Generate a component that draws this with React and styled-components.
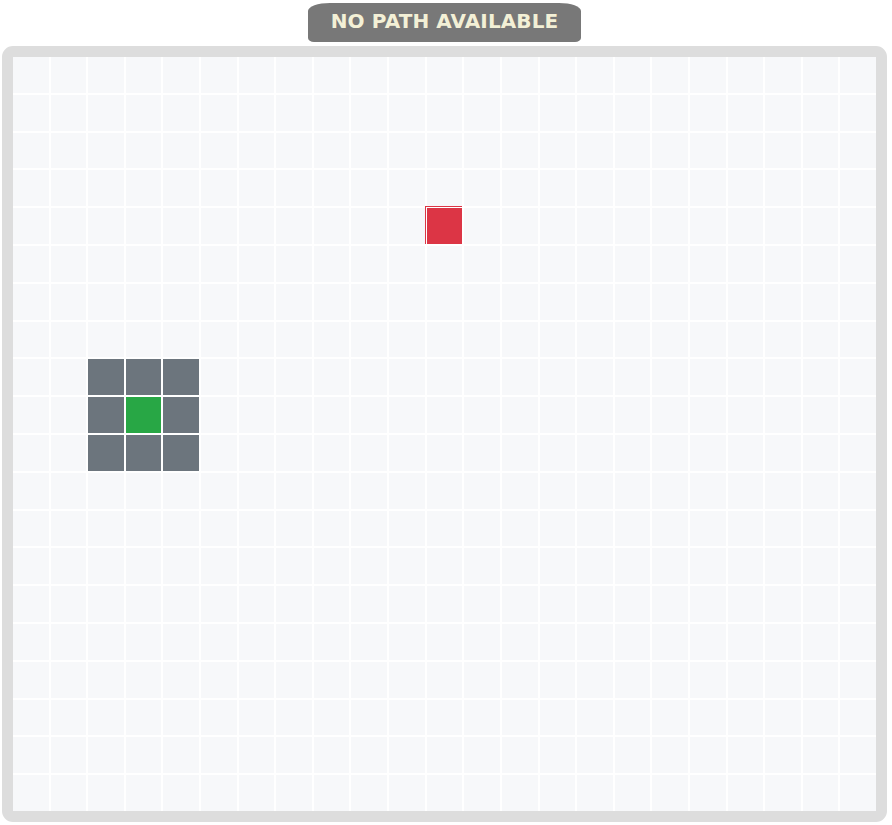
import React from "react";
import styled, { createGlobalStyle } from "styled-components";

const COLS = 23;
const ROWS = 20;
const START = { r: 4, c: 11 };
const END = { r: 9, c: 3 };
const WALLS = new Set();
for (let r = 8; r <= 10; r++) for (let c = 2; c <= 4; c++) if (!(r === 9 && c === 3)) WALLS.add(`${r}-${c}`);

const Global = createGlobalStyle`
  html, body { margin: 0; padding: 0; background: #ffffff; }
  body { font-family: "Open Sans", "Liberation Sans", sans-serif; }
`;

const Page = styled.div`
  display: flex;
  flex-direction: column;
  align-items: center;
  padding: 3px 5px 0 2px;
  gap: 4px;
`;

const Badge = styled.div`
  width: 273px;
  height: 39px;
  display: flex;
  align-items: center;
  justify-content: center;
  background: #787878;
  color: #f3f0d6;
  font-family: "DejaVu Sans", "Open Sans", sans-serif;
  font-weight: 700;
  font-size: 20px;
  letter-spacing: 0.1px;
  border-radius: 22px 22px 6px 6px / 8px 8px 4px 4px;
  box-sizing: border-box;
  padding-bottom: 4px;
`;

const Board = styled.div`
  align-self: stretch;
  border: 11px solid #dddddd;
  border-radius: 11px;
  background: #ffffff;
`;

const Grid = styled.div`
  display: grid;
  grid-template-columns: repeat(${COLS}, 1fr);
  grid-template-rows: repeat(${ROWS}, 1fr);
  gap: 2px;
  height: 754px;
  background: #ffffff;
`;

const colors = {
  empty: "#f7f8fa",
  wall: "#6c757d",
  start: "#dc3545",
  end: "#28a745",
};

const Cell = styled.div`
  position: relative;
  background: ${(p) => colors[p.$kind]};
  ${(p) =>
    p.$kind === "start" &&
    `&::before {
      content: "";
      position: absolute;
      left: -2px;
      top: -2px;
      right: 0;
      bottom: 0;
      border-left: 1px solid #dc3545;
      border-top: 1px solid #dc3545;
      pointer-events: none;
    }`}
`;

export default function App() {
  const cells = [];
  for (let r = 0; r < ROWS; r++) {
    for (let c = 0; c < COLS; c++) {
      let kind = "empty";
      if (r === START.r && c === START.c) kind = "start";
      else if (r === END.r && c === END.c) kind = "end";
      else if (WALLS.has(`${r}-${c}`)) kind = "wall";
      cells.push(<Cell key={`${r}-${c}`} $kind={kind} />);
    }
  }
  return (
    <>
      <Global />
      <Page>
        <Badge>NO PATH AVAILABLE</Badge>
        <Board>
          <Grid>{cells}</Grid>
        </Board>
      </Page>
    </>
  );
}
